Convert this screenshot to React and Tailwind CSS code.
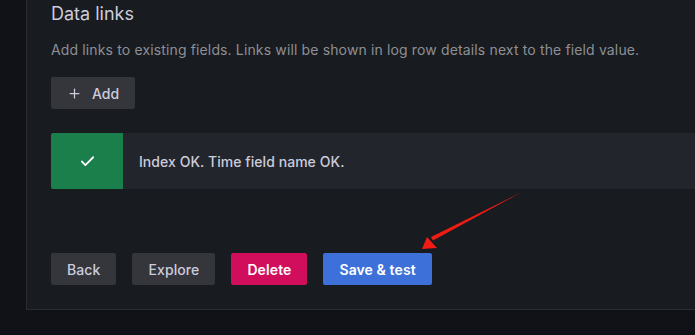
import { Check, Plus } from 'lucide-react'

const BUTTONS = [
  { label: 'Back', cls: 'bg-[#34363c] text-[#ccccdc] font-medium' },
  { label: 'Explore', cls: 'bg-[#34363c] text-[#ccccdc] font-medium' },
  { label: 'Delete', cls: 'bg-[#d10e5c] text-white font-semibold' },
  { label: 'Save & test', cls: 'bg-[#3d71d9] text-white font-semibold' },
]

export default function App() {
  return (
    <div
      className="relative w-full h-[335px] bg-[#111217] flex overflow-hidden"
      style={{ fontFamily: 'Inter, "Noto Sans", sans-serif' }}
    >
      <div className="w-[26px] shrink-0" />

      {/* Panel */}
      <div className="w-[720px] shrink-0 h-[310px] bg-[#181b1f] border-l border-b border-[#2a2c31] pl-[24px] flex flex-col">
        <h3 className="text-[18px] leading-[27px] text-[#ccccdc] font-normal">Data links</h3>
        <p className="mt-[12px] text-[14px] leading-[21px] tracking-[0.14px] text-[#8e8f96]">
          Add links to existing fields. Links will be shown in log row details next to the field value.
        </p>

        <button className="mt-[17px] self-start h-8 px-4 rounded-[2px] bg-[#34363c] text-[#ccccdc] text-[14px] font-medium flex items-center gap-[10px]">
          <Plus size={15} strokeWidth={2} />
          Add
        </button>

        {/* Alert */}
        <div className="mt-[24px] h-[56px] flex bg-[#22252b] rounded-[2px] overflow-hidden">
          <div className="w-[72px] bg-[#1a7f4b] flex items-center justify-center text-white">
            <Check size={17} strokeWidth={2.5} />
          </div>
          <div className="flex items-center pl-4 text-[14px] font-medium tracking-[0.05px] text-[#ccccdc]">
            Index OK. Time field name OK.
          </div>
        </div>

        {/* Actions */}
        <div className="mt-[64px] flex gap-4">
          {BUTTONS.map((b) => (
            <button
              key={b.label}
              className={`h-8 px-4 rounded-[2px] text-[14px] tracking-[0.1px] flex items-center ${b.cls}`}
            >
              {b.label}
            </button>
          ))}
        </div>
      </div>

      {/* Annotation arrow */}
      <svg className="absolute left-0 top-0 pointer-events-none" width="695" height="335">
        <polygon points="522,192 433,240.5 431,237 522,192" fill="#f01c14" />
        <polygon points="422,249 427,237 437,248" fill="#f01c14" />
      </svg>
    </div>
  )
}
